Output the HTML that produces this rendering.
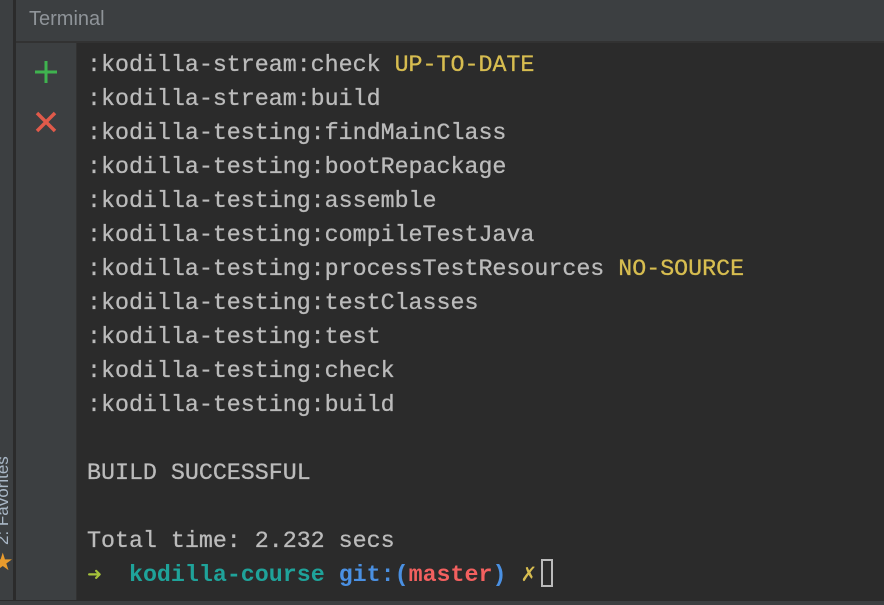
<!DOCTYPE html>
<html><head><meta charset="utf-8"><style>
html,body{margin:0;padding:0;width:884px;height:604px;overflow:hidden;background:#2b2b2b;font-family:"Liberation Mono",monospace}
.strip{position:absolute;left:0;top:0;width:13px;height:604px;background:#3c3f41;overflow:hidden}
.sep{position:absolute;left:13px;top:0;width:3px;height:604px;background:#2b2b2b}
.fav{position:absolute;left:-7px;top:545px;transform:rotate(-90deg);transform-origin:0 0;color:#a9b7c6;font:17px "Liberation Sans",sans-serif;white-space:nowrap}
.star{position:absolute;left:-8px;top:553px;color:#e89b2d;font-size:24px;line-height:24px}
.hdr{position:absolute;left:16px;top:0;width:868px;height:41px;background:#3c3f41;border-bottom:2px solid #323232}
.hdr span{position:absolute;left:13px;top:8px;color:#8f9499;font:20px "Liberation Sans",sans-serif}
.tools{position:absolute;left:16px;top:43px;width:60px;height:557px;background:#3c3f41;border-right:1px solid #323232}
.term{position:absolute;left:77px;top:43px;width:807px;height:557px;background:#2b2b2b}
.bot{position:absolute;left:0;top:600px;width:884px;height:4px;background:#3c3f41;border-top:1px solid #2b2b2b}
.lines{position:absolute;left:87px;top:48px;color:#bbbbbb;font-size:23.3px;line-height:34px;white-space:pre;-webkit-text-stroke:0.3px #bbbbbb}
.y{color:#d7bd50;-webkit-text-stroke:0.3px #d7bd50}
.g{display:inline-block;width:14px;color:#a6c23b;font-size:18px;vertical-align:1px;-webkit-text-stroke:0}
.c{color:#1fa39a;font-weight:bold;-webkit-text-stroke:0}.b{color:#4a90e2;font-weight:bold;-webkit-text-stroke:0}.r{color:#f3605f;font-weight:bold;-webkit-text-stroke:0}
.x{color:#d7bd50;font-size:20px;-webkit-text-stroke:0}
.cur{display:inline-block;width:12px;height:28px;border:2px solid #bbbbbb;box-sizing:border-box;vertical-align:-6px;margin-left:4px}
</style></head><body>
<div class="strip"><div class="fav">2: Favorites</div><div class="star">★</div></div>
<div class="sep"></div>
<div class="hdr"><span>Terminal</span></div>
<div class="tools">
<svg width="60" height="120" style="position:absolute;left:0;top:0">
<path d="M30 18V40M19 29H41" stroke="#3fb34f" stroke-width="3"/>
<path d="M21 70L39 88M39 70L21 88" stroke="#e05a4a" stroke-width="3.5"/>
</svg></div>
<div class="term"></div>
<div class="lines">:kodilla-stream:check <span class="y">UP-TO-DATE</span>
:kodilla-stream:build
:kodilla-testing:findMainClass
:kodilla-testing:bootRepackage
:kodilla-testing:assemble
:kodilla-testing:compileTestJava
:kodilla-testing:processTestResources <span class="y">NO-SOURCE</span>
:kodilla-testing:testClasses
:kodilla-testing:test
:kodilla-testing:check
:kodilla-testing:build

BUILD SUCCESSFUL

Total time: 2.232 secs
<span class="g">➜</span>  <span class="c">kodilla-course</span> <span class="b">git:(</span><span class="r">master</span><span class="b">)</span> <span class="x">✗</span><span class="cur"></span></div>
<div class="bot"></div>
</body></html>
